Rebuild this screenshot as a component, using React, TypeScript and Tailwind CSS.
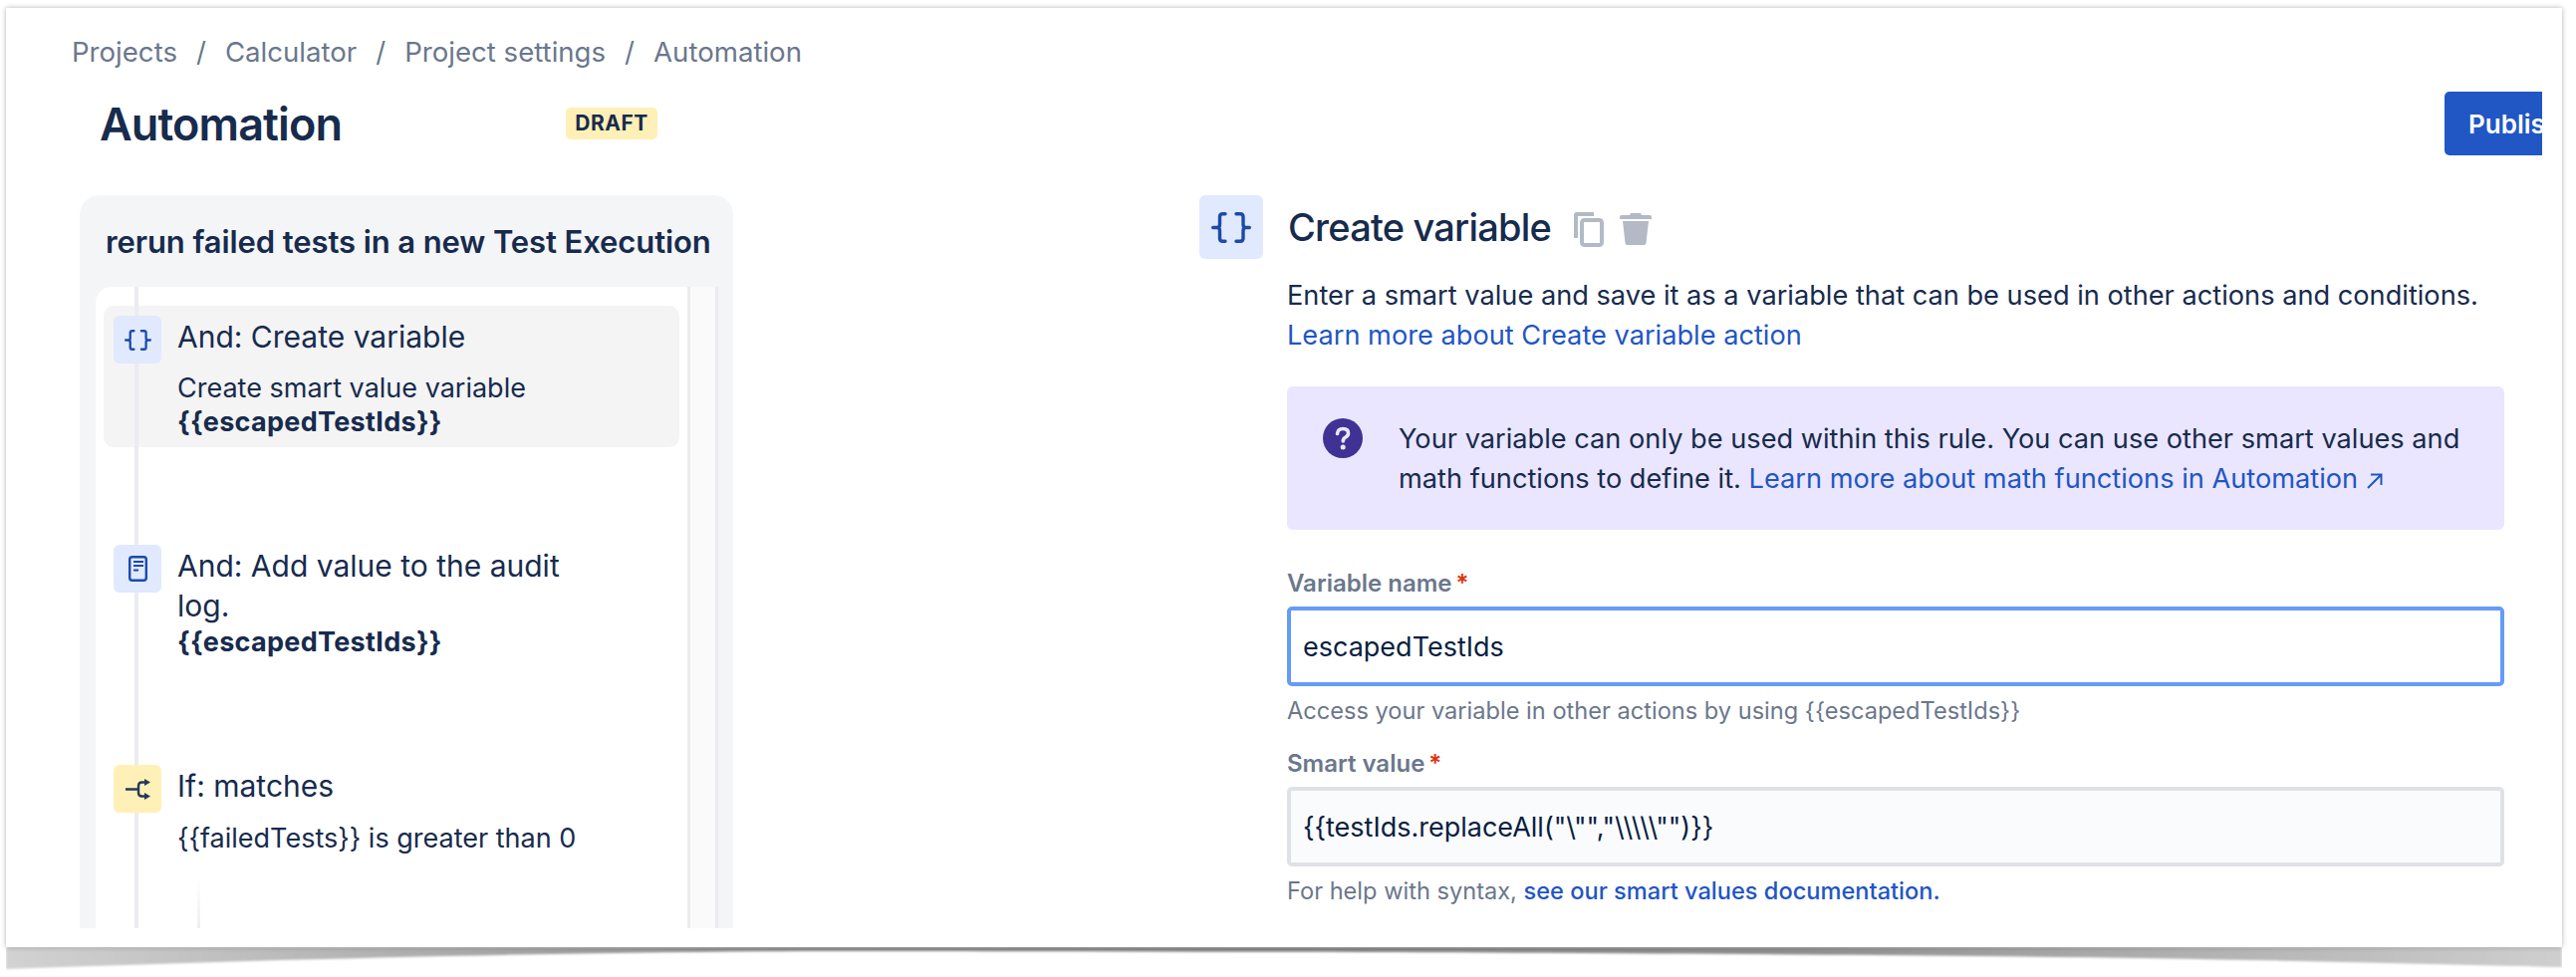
// Automation rule editor: Create variable step, framed like a pasted docs screenshot.

function Braces({ className }: { className: string }) {
  return (
    <svg viewBox="0 0 40 31" fill="none" stroke="#1c4aa8" strokeWidth="3.4" strokeLinecap="round" className={className}>
      <path d="M14 1.8H11.5Q8.5 1.8 8.5 4.8V12.5Q8.5 15.5 5.5 15.5H1.7M5.5 15.5Q8.5 15.5 8.5 18.5V26.2Q8.5 29.2 11.5 29.2H14" />
      <path d="M25 1.8H29Q32 1.8 32 4.8V12.5Q32 15.5 35 15.5H38.3M35 15.5Q32 15.5 32 18.5V26.2Q32 29.2 29 29.2H25" />
    </svg>
  );
}

function LogIcon() {
  return (
    <svg viewBox="0 0 19 26" fill="none" stroke="#1c4aa8" className="w-[19px] h-[26px]">
      <rect x="1.2" y="1.2" width="16.6" height="23.6" rx="2.5" strokeWidth="2.4" />
      <path d="M5 6H15M5 10H15M5 14.5H10" strokeWidth="2.2" />
    </svg>
  );
}

function BranchIcon() {
  return (
    <svg viewBox="0 0 25 21" className="w-[25px] h-[21px]">
      <path d="M0 10.5H13M21 3.5H16.5Q13 3.5 13 7V14Q13 17.5 16.5 17.5H21" fill="none" stroke="#253858" strokeWidth="2.4" />
      <path d="M19 0L25 3.5L19 7ZM19 14L25 17.5L19 21Z" fill="#253858" />
    </svg>
  );
}

function CopyIcon() {
  return (
    <svg viewBox="0 0 30 35" fill="none" stroke="#b3bac5" className="w-[30px] h-[35px]">
      <path d="M20 2H3Q2 2 2 3V26" strokeWidth="4" />
      <rect x="8" y="8" width="20" height="25" rx="2.5" strokeWidth="4" />
    </svg>
  );
}

function TrashIcon() {
  return (
    <svg viewBox="0 0 32 32" fill="#b3bac5" className="w-[32px] h-[32px]">
      <path d="M11 0H21L22 2H30Q32 2 32 4V6H0V4Q0 2 2 2H10Z" />
      <path d="M3 8H29L26.5 30Q26.3 32 24.5 32H7.5Q5.7 32 5.5 30Z" />
    </svg>
  );
}

function QuestionIcon() {
  return (
    <svg viewBox="0 0 40 40" className="w-[40px] h-[40px] shrink-0">
      <circle cx="20" cy="20" r="20" fill="#403294" />
      <path d="M14.5 15.5Q15 10.5 20.2 10.5Q25.5 10.5 25.5 15Q25.5 17.6 22.8 19Q20.3 20.3 20.3 23" fill="none" stroke="#eae6ff" strokeWidth="3.6" strokeLinecap="round" />
      <circle cx="20.2" cy="29" r="2.5" fill="#eae6ff" />
    </svg>
  );
}

function ExternalArrow() {
  return (
    <svg viewBox="0 0 16 16" fill="none" stroke="#1f56c4" strokeWidth="2" className="inline-block ml-[9px] w-[16px] h-[16px] align-[-1px]">
      <path d="M1 15L14.5 1.5M4 1.5H14.5V12" />
    </svg>
  );
}

function BottomCurl() {
  return (
    <svg viewBox="0 0 2566 24" preserveAspectRatio="none" className="absolute left-[6px] top-[951px] w-[2566px] h-[24px]">
      <defs>
        <linearGradient id="curl" x1="0" x2="1" y1="0" y2="0">
          <stop offset="0" stopColor="#d2d2d2" />
          <stop offset="0.12" stopColor="#b8b8b8" />
          <stop offset="0.3" stopColor="#8c8c8c" />
          <stop offset="0.5" stopColor="#858585" />
          <stop offset="0.7" stopColor="#8f8f8f" />
          <stop offset="0.86" stopColor="#b2b2b2" />
          <stop offset="1" stopColor="#cfcfcf" />
        </linearGradient>
        <filter id="curlBlur" x="-1%" y="-30%" width="102%" height="160%">
          <feGaussianBlur stdDeviation="0.9" />
        </filter>
      </defs>
      <path d="M0 0H2566V20C2400 16 2200 11 1980 9C1700 6 1200 4 800 4C500 6 250 13 0 22Z" fill="url(#curl)" filter="url(#curlBlur)" />
    </svg>
  );
}

function StepRow({ tile, tileClass, children }: { tile: React.ReactNode; tileClass: string; children: React.ReactNode }) {
  return (
    <div className="flex gap-[16px] pl-[10px]">
      <div className={`relative z-10 w-[48px] h-[48px] shrink-0 rounded-[6px] flex items-center justify-center ${tileClass}`}>{tile}</div>
      <div className="max-w-[420px] pt-[1px]">{children}</div>
    </div>
  );
}

function RulePanel() {
  return (
    <div className="w-[656px] h-[736px] shrink-0 bg-[#f4f5f7] rounded-t-[20px] overflow-hidden">
      <div className="h-[92px] pl-[26px] pt-[29px] text-[31px] leading-[36px] font-semibold tracking-[-0.1px] text-[#172b4d] whitespace-nowrap">
        rerun failed tests in a new Test Execution
      </div>
      <div className="ml-[16px] flex h-[644px]">
        <div className="relative w-[594px] bg-white rounded-tl-[16px] pt-[19px] px-[8px] text-[#172b4d]">
          <div className="absolute left-[39px] top-0 bottom-0 w-[4px] bg-[#ebecf0]" />
          <div className="h-[142px] bg-[#f4f4f5] rounded-[10px] pt-[10px]">
            <StepRow tile={<Braces className="w-[27px] h-[21px]" />} tileClass="bg-[#e0e9fd]">
              <div className="text-[30px] leading-[40px]">And: Create variable</div>
              <div className="mt-[15px] text-[27px] leading-[34px]">Create smart value variable</div>
              <div className="text-[27px] leading-[34px] font-bold tracking-[0.3px]">{'{{escapedTestIds}}'}</div>
            </StepRow>
          </div>
          <div className="mt-[98px]">
            <StepRow tile={<LogIcon />} tileClass="bg-[#e0e9fd]">
              <div className="text-[30px] leading-[40px]">And: Add value to the audit log.</div>
              <div className="text-[27px] leading-[34px] font-bold tracking-[0.3px]">{'{{escapedTestIds}}'}</div>
            </StepRow>
          </div>
          <div className="mt-[106px]">
            <StepRow tile={<BranchIcon />} tileClass="bg-[#fff0b8]">
              <div className="text-[30px] leading-[40px]">If: matches</div>
              <div className="mt-[16px] text-[27px] leading-[34px]">{'{{failedTests}} is greater than 0'}</div>
            </StepRow>
          </div>
          <div className="ml-[94px] mt-[21px] w-[3px] h-[60px] bg-gradient-to-b from-white to-[#ebecf0]" />
        </div>
        <div className="w-[31px] bg-[#fafafa] border-x-[3px] border-[#ebecf0]" />
      </div>
    </div>
  );
}

function FieldLabel({ children }: { children: React.ReactNode }) {
  return (
    <div className="text-[24px] leading-[30px] font-semibold text-[#6b778c]">
      {children}
      <span className="ml-[4px] text-[#de350b]">*</span>
    </div>
  );
}

function VariableForm() {
  return (
    <div className="flex-1">
      <div className="flex items-center h-[64px]">
        <div className="w-[64px] h-[64px] rounded-[6px] bg-[#e0e9fd] flex items-center justify-center">
          <Braces className="w-[40px] h-[31px]" />
        </div>
        <h2 className="ml-[25px] text-[38px] leading-[48px] font-medium tracking-[-0.8px] text-[#172b4d]">Create variable</h2>
        <div className="ml-[23px] mt-[4px] flex items-center gap-[16px]">
          <CopyIcon />
          <TrashIcon />
        </div>
      </div>

      <div className="ml-[88px] w-[1222px]">
        <p className="mt-[17px] text-[27.2px] leading-[40px] text-[#172b4d]">
          Enter a smart value and save it as a variable that can be used in other actions and conditions.
          <br />
          <a className="text-[#1f56c4]">Learn more about Create variable action</a>
        </p>

        <div className="mt-[31px] h-[144px] rounded-[6px] bg-[#eae6ff] flex gap-[36px] pl-[36px] pt-[32px]">
          <QuestionIcon />
          <p className="pt-[1px] text-[27.2px] leading-[40px] text-[#172b4d]">
            Your variable can only be used within this rule. You can use other smart values and
            <br />
            math functions to define it. <a className="text-[#1f56c4]">Learn more about math functions in Automation<ExternalArrow /></a>
          </p>
        </div>

        <div className="mt-[39px]">
          <FieldLabel>Variable name</FieldLabel>
        </div>
        <input
          readOnly
          value="escapedTestIds"
          className="mt-[8px] block w-full h-[80px] rounded-[5px] border-[4px] border-[#659bf9] bg-white px-[12px] text-[27px] text-[#091e42] outline-none"
        />
        <div className="mt-[10px] text-[23.6px] leading-[30px] text-[#6b778c]">
          {'Access your variable in other actions by using {{escapedTestIds}}'}
        </div>

        <div className="mt-[23px]">
          <FieldLabel>Smart value</FieldLabel>
        </div>
        <input
          readOnly
          value={'{{testIds.replaceAll("\\"","\\\\\\\\\\"")}}'}
          className="mt-[8px] block w-full h-[80px] rounded-[5px] border-[4px] border-[#dfe1e6] bg-[#fafbfc] px-[12px] text-[27px] text-[#091e42] outline-none"
        />
        <div className="mt-[10px] text-[23.6px] leading-[30px] text-[#6b778c]">
          For help with syntax, <a className="text-[#1f56c4] font-medium">see our smart values documentation.</a>
        </div>
      </div>
    </div>
  );
}

export default function App() {
  return (
    <div className="relative w-[2586px] h-[981px] bg-white overflow-hidden pt-[8px] pl-[6px] [font-family:Inter,sans-serif]">
      <BottomCurl />
      <div className="relative w-[2566px] h-[943px] bg-white shadow-[0_0_5px_rgba(0,0,0,0.3)] overflow-hidden pt-[24px]">
        {/* Breadcrumbs */}
        <nav className="flex items-center h-[40px] pt-[2px] pl-[66px] text-[27.6px] text-[#6b778c]">
          <span>Projects</span>
          <span className="mx-[19px]">/</span>
          <span>Calculator</span>
          <span className="mx-[19px]">/</span>
          <span>Project settings</span>
          <span className="mx-[19px]">/</span>
          <span>Automation</span>
        </nav>

        {/* Title row */}
        <div className="mt-[20px] flex items-center h-[64px] pl-[94px] pr-[20px]">
          <h1 className="w-[468px] pt-[2px] text-[45px] leading-[56px] font-semibold tracking-[-0.9px] text-[#172b4d]">Automation</h1>
          <span className="h-[32px] w-[92px] rounded-[5px] bg-[#fff0b8] flex items-center justify-center text-[21px] font-bold tracking-[0.5px] text-[#172b4d]">
            DRAFT
          </span>
          <div className="ml-auto w-[98px] h-[64px] rounded-l-[5px] bg-[#2156c5] overflow-hidden pl-[24px] flex items-center text-[26px] font-semibold text-white whitespace-nowrap">
            Publish
          </div>
        </div>

        {/* Rule tree and step config */}
        <div className="mt-[40px] flex h-[736px] overflow-hidden pl-[74px]">
          <RulePanel />
          <div className="ml-[468px] w-[1310px] flex">
            <VariableForm />
          </div>
        </div>
      </div>
    </div>
  );
}
